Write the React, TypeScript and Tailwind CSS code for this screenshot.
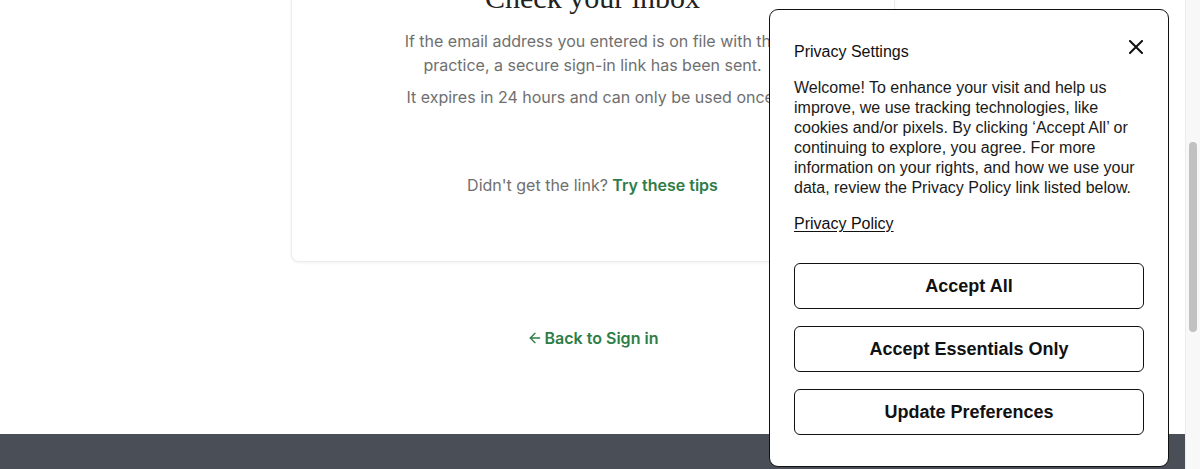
import React from "react";
import { ArrowLeft } from "lucide-react";

export default function App() {
  return (
    <div className="relative flex h-[469px] w-[1200px] overflow-hidden bg-white">
      <div className="flex w-[1185px] flex-col" style={{ fontFamily: "Inter, 'Noto Sans', sans-serif" }}>
        <div className="mt-[-61px] flex flex-col items-center">
          <div className="w-[604px] rounded-lg border border-[#ececec] bg-white px-[40px] pb-[64px] pt-[40px] shadow-[0_1px_3px_rgba(0,0,0,0.06)]">
            <h1
              className="text-center text-[30px] leading-[36px] text-[#222]"
              style={{ fontFamily: "'Liberation Serif', 'DejaVu Serif', serif" }}
            >
              Check your inbox
            </h1>
            <p className="mx-auto mt-[13px] w-[400px] text-center text-[16px] leading-[24px] text-[#6f6f6f]">
              If the email address you entered is on file with the practice, a secure sign-in link has been sent.
            </p>
            <p className="mt-[8px] text-center text-[16px] leading-[24px] text-[#6f6f6f]">
              It expires in 24 hours and can only be used once.
            </p>
            <p className="mt-[64px] text-center text-[16px] leading-[24px] text-[#6f6f6f]">
              Didn't get the link? <span className="font-semibold text-[#2e7d46]">Try these tips</span>
            </p>
          </div>
          <div className="mt-[64px] flex items-center gap-[2px] text-[16px] font-semibold leading-[24px] text-[#2e7d46]">
            <ArrowLeft size={16} strokeWidth={2} />
            <span>Back to Sign in</span>
          </div>
        </div>
        <div className="mt-auto h-[35px] bg-[#4a4e56]" />
      </div>
      <div className="relative w-[15px] border-l border-[#ebebeb] bg-[#f8f8f8]">
        <div className="absolute left-[3px] top-[142px] h-[190px] w-[8px] rounded-full bg-[#c1c1c1]" />
      </div>

      <div
        className="absolute left-[769px] top-[9px] w-[400px] rounded-[9px] border border-[#111] bg-white px-[24px] pb-[31px] pt-[32px] text-[#111]"
        style={{ fontFamily: "'Liberation Sans', Arial, sans-serif" }}
      >
        <div className="flex items-center justify-between">
          <h2 className="text-[16px] leading-[20px]">Privacy Settings</h2>
          <svg width="14" height="14" viewBox="0 0 14 14" className="mr-[1px] mt-[-11px]">
            <path d="M1 1L13 13M13 1L1 13" stroke="#111" strokeWidth="2" strokeLinecap="square" />
          </svg>
        </div>
        <p className="mr-[-24px] mt-[16px] whitespace-nowrap text-[16px] leading-[20px] text-[#1a1a1a]">
          Welcome! To enhance your visit and help us
          <br />
          improve, we use tracking technologies, like
          <br />
          cookies and/or pixels. By clicking ‘Accept All’ or
          <br />
          continuing to explore, you agree. For more
          <br />
          information on your rights, and how we use your
          <br />
          data, review the Privacy Policy link listed below.
        </p>
        <p className="mt-[16px] text-[16px] leading-[20px] underline underline-offset-2">Privacy Policy</p>
        <div className="mt-[29px] flex flex-col gap-[17px]">
          {["Accept All", "Accept Essentials Only", "Update Preferences"].map((t) => (
            <button
              key={t}
              className="h-[46px] w-[350px] rounded-[6px] border border-[#111] bg-white text-[18px] font-bold text-[#111]"
            >
              {t}
            </button>
          ))}
        </div>
      </div>
    </div>
  );
}
